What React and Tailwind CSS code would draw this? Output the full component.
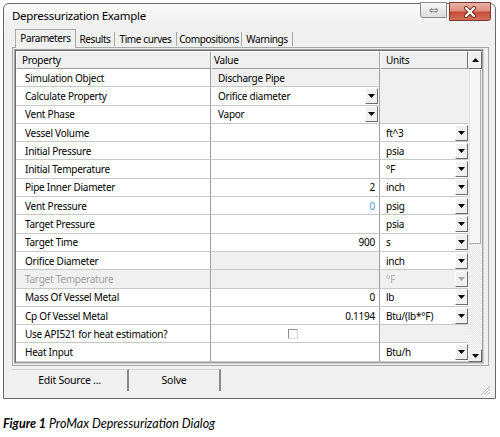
import React from 'react';

const rows = [
  { p: 'Simulation Object', v: 'Discharge Pipe', gray: true },
  { p: 'Calculate Property', v: 'Orifice diameter', drop: true },
  { p: 'Vent Phase', v: 'Vapor', drop: true },
  { p: 'Vessel Volume', u: 'ft^3' },
  { p: 'Initial Pressure', u: 'psia' },
  { p: 'Initial Temperature', u: '°F' },
  { p: 'Pipe Inner Diameter', n: '2', u: 'inch' },
  { p: 'Vent Pressure', n: '0', blue: true, u: 'psig' },
  { p: 'Target Pressure', u: 'psia' },
  { p: 'Target Time', n: '900', u: 's' },
  { p: 'Orifice Diameter', gray: true, u: 'inch' },
  { p: 'Target Temperature', disabled: true, u: '°F' },
  { p: 'Mass Of Vessel Metal', n: '0', u: 'lb' },
  { p: 'Cp Of Vessel Metal', n: '0.1194', u: 'Btu/(lb*°F)' },
  { p: 'Use API521 for heat estimation?', check: true },
  { p: 'Heat Input', u: 'Btu/h' },
];

const tabs = [
  { label: 'Parameters', w: 'w-[61px]' },
  { label: 'Results', w: 'w-[39px]' },
  { label: 'Time curves', w: 'w-[62px]' },
  { label: 'Compositions', w: 'w-[65px]' },
  { label: 'Warnings', w: 'w-[51px]' },
];

function DropBtn({ disabled }) {
  return (
    <div className="w-[13px] h-[16px] shrink-0 bg-[#f0f0f0] border border-t-white border-l-white border-r-[#6d6d6d] border-b-[#6d6d6d] flex items-center justify-center">
      <svg width="7" height="4" viewBox="0 0 7 4">
        <path d="M0 0h7L3.5 4z" fill={disabled ? '#a8a8a8' : '#000'} />
      </svg>
    </div>
  );
}

function Row({ r, nextHasUnit }) {
  const propCls = r.disabled ? 'bg-[#f0f0f0] text-[#a0a0a0]' : 'bg-white text-black';
  const valCls = r.gray || r.disabled ? 'bg-[#f0f0f0]' : 'bg-white';
  return (
    <div className="flex h-[18.3px]">
      <div className={`w-[195px] shrink-0 flex items-center pl-[9px] border-r border-r-[#a0a0a0] border-b border-b-[#c8c8c8] ${propCls}`}>
        {r.p}
      </div>
      <div className={`w-[169px] shrink-0 flex items-center border-r border-r-[#a0a0a0] border-b border-b-[#c8c8c8] ${valCls}`}>
        {r.v && <span className="flex-1 pl-[7px]">{r.v}</span>}
        {r.drop && <div className="mr-[1px]"><DropBtn /></div>}
        {r.n && (
          <span className={`flex-1 text-right pr-[4px] ${r.blue ? 'text-[#4f9fe0]' : 'text-black'}`}>{r.n}</span>
        )}
        {r.check && (
          <div className="ml-[77px] w-[10px] h-[10px] bg-white border border-[#8f8f8f] border-r-[#dcdcdc] border-b-[#dcdcdc]" />
        )}
      </div>
      {r.u ? (
        <div className={`w-[88px] shrink-0 flex items-center border-b border-b-[#c8c8c8] ${r.disabled ? 'bg-[#f0f0f0] text-[#b0b0b0]' : 'bg-white text-black'}`}>
          <span className="flex-1 pl-[6px]">{r.u}</span>
          <DropBtn disabled={r.disabled} />
        </div>
      ) : (
        <div className={`w-[88px] shrink-0 bg-[#f0f0f0] ${nextHasUnit ? 'border-b border-b-[#c8c8c8]' : ''}`} />
      )}
    </div>
  );
}

function Scrollbar() {
  return (
    <div className="w-[14px] shrink-0 flex flex-col bg-[#f0f0f0]">
      <div className="h-[18px] bg-[#f0f0f0] border border-t-white border-l-white border-r-[#6d6d6d] border-b-[#6d6d6d] flex items-center justify-center">
        <svg width="7" height="4" viewBox="0 0 7 4">
          <path d="M3.5 0L7 4H0z" fill="#000" />
        </svg>
      </div>
      <div className="h-[175px] mx-[1px] bg-[#f7f7f7] border border-[#a9a9a9] border-t-white border-l-[#e2e2e2]" />
      <div className="flex-1 mx-[1px] bg-[repeating-conic-gradient(#ffffff_0_25%,#e4e4e4_0_50%)] bg-[length:2px_2px]" />
      <div className="h-[13px] bg-[#f0f0f0] border border-t-white border-l-white border-r-[#6d6d6d] border-b-[#6d6d6d] flex items-center justify-center">
        <svg width="7" height="4" viewBox="0 0 7 4">
          <path d="M0 0h7L3.5 4z" fill="#000" />
        </svg>
      </div>
    </div>
  );
}

export default function App() {
  return (
    <div
      className="w-[500px] h-[437px] bg-white overflow-hidden pt-[3px] pl-[3px]"
      style={{ fontFamily: '"Noto Sans", "Liberation Sans", sans-serif' }}
    >
      {/* Window */}
      <div className="relative w-[493px] h-[396px] border border-[#6a6a6a] rounded-t-[6px] bg-[#f0f0f0] flex flex-col">
        {/* Title bar */}
        <div className="h-[25px] flex items-start bg-[linear-gradient(#fbfbfb,#eeeeee)] rounded-t-[6px]">
          <span className="pl-[8px] pt-[3px] text-[11.5px] tracking-[-0.3px] text-black">Depressurization Example</span>
          <div className="ml-auto mr-[4px] -mt-[2px] flex items-start gap-[2px]">
            <div className="w-[27px] h-[16px] rounded-bl-[3px] border border-[#8a8a8a] bg-[linear-gradient(#f8f8f8,#dcdcdc)] flex items-center justify-center text-[#8a8a8a] text-[12px] leading-none">
              <span style={{ fontFamily: '"DejaVu Sans", sans-serif' }}>⇔</span>
            </div>
            <div className="w-[42px] h-[19px] rounded-br-[3px] border border-[#7a3a30] bg-[linear-gradient(#ecb3a6_0%,#df8f80_45%,#c64c38_55%,#d46e58_100%)] flex items-center justify-center">
              <svg width="14" height="12" viewBox="0 0 14 12">
                <path d="M3 2l8 8M11 2l-8 8" stroke="#6d2a20" strokeWidth="4" strokeLinecap="round" />
                <path d="M3 2l8 8M11 2l-8 8" stroke="#ffffff" strokeWidth="2.2" strokeLinecap="round" />
              </svg>
            </div>
          </div>
        </div>

        {/* Tabs */}
        <div className="ml-[11px] h-[18px] flex items-end text-[10px] tracking-[-0.4px] text-black relative z-10">
          {tabs.map((t, i) =>
            i === 0 ? (
              <div key={t.label} className={`${t.w} h-[19px] -mb-[1px] bg-[#f0f0f0] border border-b-0 border-[#a7a7a7] flex items-center justify-center pb-[1px]`}>
                {t.label}
              </div>
            ) : (
              <div key={t.label} className={`${t.w} h-[14px] mb-[1px] border-r border-[#a7a7a7] flex items-center justify-center`}>
                {t.label}
              </div>
            )
          )}
        </div>

        {/* Tab panel */}
        <div className="ml-[8px] w-[477px] h-[319px] border border-[#a7a7a7] p-[1px]">
          <div className="w-[470px] h-[315px] border border-[#a0a0a0] border-r-[#cfcfcf] border-b-[#cfcfcf]">
            <div className="flex h-full border border-[#6f6f6f] border-r-[#a0a0a0] border-b-[#a0a0a0] text-[10px] tracking-[-0.25px] leading-none">
              <div className="flex flex-col">
                {/* Header */}
                <div className="flex h-[18px] bg-[#f0f0f0]">
                  <div className="w-[195px] pl-[5px] flex items-center border border-t-white border-l-white border-r-[#a0a0a0] border-b-[#a0a0a0]">Property</div>
                  <div className="w-[169px] pl-[2px] flex items-center border border-t-white border-l-white border-r-[#a0a0a0] border-b-[#a0a0a0]">Value</div>
                  <div className="w-[88px] pl-[5px] flex items-center border border-t-white border-l-white border-r-[#6d6d6d] border-b-[#a0a0a0]">Units</div>
                </div>
                {rows.map((r, i) => (
                  <Row key={r.p} r={r} nextHasUnit={rows[i + 1] && !!rows[i + 1].u} />
                ))}
              </div>
              <Scrollbar />
            </div>
          </div>
        </div>

        {/* Buttons */}
        <div className="ml-[8px] mt-[3px] flex text-[10.5px] tracking-[-0.25px] text-black">
          <div className="w-[117px] h-[22px] flex items-center justify-center border-t border-t-[#d8d8d8] border-r-2 border-r-[#8a8a8a]">
            Edit Source ...
          </div>
          <div className="w-[92px] h-[22px] flex items-center justify-center border-t border-t-[#d8d8d8] border-r-2 border-r-[#8a8a8a]">
            Solve
          </div>
        </div>

        {/* Resize grip */}
        <svg className="absolute right-[4px] bottom-[2px]" width="12" height="12" viewBox="0 0 12 12">
          <path d="M11 2L2 11M11 5L5 11M11 8L8 11" stroke="#b8b8b8" strokeWidth="1" />
          <path d="M12 3L3 12M12 6L6 12M12 9L9 12" stroke="#ffffff" strokeWidth="1" />
        </svg>
      </div>

      {/* Caption */}
      <div
        className="mt-[19px] text-[12.5px] italic text-black leading-none"
        style={{ fontFamily: 'Lato, "Open Sans", sans-serif' }}
      >
        <span className="font-bold">Figure 1</span> ProMax Depressurization Dialog
      </div>
    </div>
  );
}
